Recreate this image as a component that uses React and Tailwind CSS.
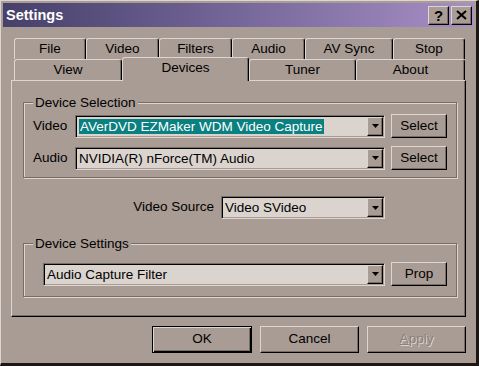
import React from 'react';

// classic raised / sunken edges
const raised =
  'bg-[#a99c94] border border-t-[#ddd5cf] border-l-[#ddd5cf] border-r-black border-b-black shadow-[inset_-1px_-1px_0_#776c66]';
const sunken =
  'bg-[#dbd4ce] border border-t-[#776c66] border-l-[#776c66] border-r-[#ddd5cf] border-b-[#ddd5cf] shadow-[inset_1px_1px_0_#000,inset_-1px_-1px_0_#a99c94]';

function Arrow() {
  return (
    <svg width="7" height="4" viewBox="0 0 7 4">
      <polygon points="0,0 7,0 3.5,4" fill="#000" />
    </svg>
  );
}

function Combo({ className = '', children }) {
  return (
    <div className={`${className} ${sunken} h-[23px] flex items-center pl-[3px]`}>
      <div className="flex-1 truncate text-[13.5px] leading-[15px] text-black">{children}</div>
      <div className={`${raised} w-[16px] h-[19px] mr-[1px] flex items-center justify-center shrink-0`}>
        <Arrow />
      </div>
    </div>
  );
}

function Button({ className = '', children }) {
  return (
    <div className={`${className} ${raised} flex items-center justify-center text-[13.5px] text-black`}>
      {children}
    </div>
  );
}

function Tab({ label, w, selected }) {
  if (selected) {
    return (
      <div
        className={`${w} relative z-10 h-[24px] -mt-[2px] bg-[#a99c94] border-t border-l border-r border-t-[#ddd5cf] border-l-[#ddd5cf] border-r-black rounded-t-[3px] shadow-[inset_-1px_0_0_#776c66] flex items-center justify-center pb-[3px] text-[13.5px]`}
      >
        {label}
      </div>
    );
  }
  return (
    <div
      className={`${w} h-[21px] bg-[#a99c94] border-t border-l border-r border-t-[#ddd5cf] border-l-[#ddd5cf] border-r-black rounded-t-[3px] shadow-[inset_-1px_0_0_#776c66] flex items-center justify-center text-[13.5px]`}
    >
      {label}
    </div>
  );
}

function Group({ title, className = '', children }) {
  return (
    <div className={`${className} relative ml-[11px] w-[434px] border border-[#776c66] shadow-[inset_1px_1px_0_#ddd5cf,1px_1px_0_#ddd5cf]`}>
      <span className="absolute -top-[8px] left-[9px] bg-[#a99c94] px-[2px] text-[13.5px] leading-[15px]">{title}</span>
      {children}
    </div>
  );
}

export default function App() {
  return (
    <div className="w-[479px] h-[366px] bg-[#a99c94] border-t border-l border-[#ddd5cf] border-r-[3px] border-b-[3px] border-r-[#1c1614] border-b-[#1c1614] font-['Liberation_Sans',Arial,sans-serif] text-black overflow-hidden">
      <div className="pt-[2px] px-[2px]">
        {/* title bar */}
        <div className="h-[24px] bg-linear-to-r from-[#46406a] via-[#76679a] to-[#a88fc6] flex items-center pl-[3px] pr-[2px]">
          <span className="flex-1 text-white font-bold text-[14.5px] leading-none">Settings</span>
          <div className="flex gap-[2px]">
            <div className={`${raised} w-[21px] h-[19px] flex items-center justify-center font-bold text-[15px] leading-none`}>?</div>
            <div className={`${raised} w-[21px] h-[19px] flex items-center justify-center`}>
              <svg width="11" height="10" viewBox="0 0 11 10">
                <path d="M1 1L10 9M10 1L1 9" stroke="#000" strokeWidth="2" />
              </svg>
            </div>
          </div>
        </div>

        {/* tabs */}
        <div className="mt-[11px] ml-[11px]">
          <div className="flex h-[21px]">
            <Tab label="File" w="w-[72px]" />
            <Tab label="Video" w="w-[73px]" />
            <Tab label="Filters" w="w-[73px]" />
            <Tab label="Audio" w="w-[73px]" />
            <Tab label="AV Sync" w="w-[88px]" />
            <Tab label="Stop" w="w-[72px]" />
          </div>
          <div className="flex h-[21px] items-start">
            <Tab label="View" w="w-[108px]" />
            <Tab label="Devices" w="w-[127px]" selected />
            <Tab label="Tuner" w="w-[107px]" />
            <Tab label="About" w="w-[109px]" />
          </div>
        </div>

        {/* page */}
        <div className="ml-[8px] w-[455px] h-[237px] border border-t-[#ddd5cf] border-l-[#ddd5cf] border-r-black border-b-black shadow-[inset_-1px_-1px_0_#776c66]">
          <Group title="Device Selection" className="mt-[21px] h-[76px] pt-[11px] pl-[9px]">
            <div className="flex items-center h-[24px]">
              <span className="w-[42px] text-[13.5px]">Video</span>
              <Combo className="w-[310px]">
                <span className="bg-[#0a8080] text-white px-[1px]">AVerDVD EZMaker WDM Video Capture</span>
              </Combo>
              <Button className="ml-[6px] w-[56px] h-[24px]">Select</Button>
            </div>
            <div className="flex items-center h-[24px] mt-[8px]">
              <span className="w-[42px] text-[13.5px]">Audio</span>
              <Combo className="w-[310px]">NVIDIA(R) nForce(TM) Audio</Combo>
              <Button className="ml-[6px] w-[56px] h-[24px]">Select</Button>
            </div>
          </Group>

          <div className="flex items-center h-[23px] mt-[18px]">
            <span className="w-[202px] text-right text-[13.5px]">Video Source</span>
            <Combo className="ml-[7px] w-[164px]">Video SVideo</Combo>
          </div>

          <Group title="Device Settings" className="mt-[24px] h-[54px] pt-[18px] pl-[19px]">
            <div className="flex items-center h-[24px]">
              <Combo className="w-[342px]">Audio Capture Filter</Combo>
              <Button className="ml-[6px] w-[56px] h-[24px]">Prop</Button>
            </div>
          </Group>
        </div>

        {/* dialog buttons */}
        <div className="mt-[9px] flex justify-end gap-[8px] pr-[8px]">
          <div className="w-[100px] h-[27px] border border-black bg-[#a99c94] shadow-[inset_1px_1px_0_#ddd5cf,inset_-1px_-1px_0_#000,inset_-2px_-2px_0_#776c66] flex items-center justify-center text-[13.5px]">
            OK
          </div>
          <Button className="w-[99px] h-[27px]">Cancel</Button>
          <Button className="w-[99px] h-[27px] text-[#8c817b]! [text-shadow:1px_1px_0_#ddd5cf]">
            <span className="underline">A</span>pply
          </Button>
        </div>
      </div>
    </div>
  );
}
